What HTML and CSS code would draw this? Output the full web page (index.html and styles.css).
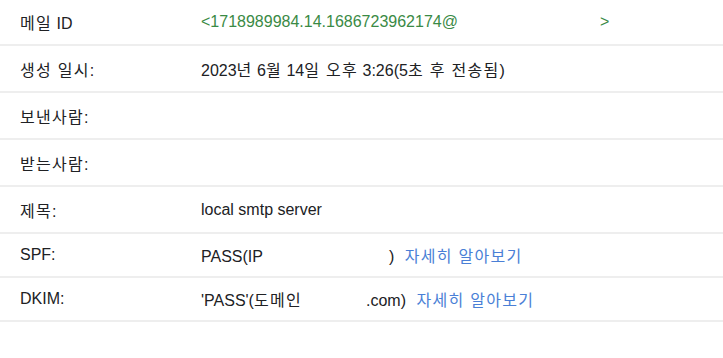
FILE: index.html
```html
<!DOCTYPE html>
<html lang="ko">
<head>
<meta charset="utf-8">
<link rel="stylesheet" href="styles.css">
</head>
<body>
<div class="table">
  <div class="row first">
    <div class="label"><span class="ko">메일</span> ID</div>
    <div class="value green">&lt;1718989984.14.1686723962174@<span class="gap gap-id"></span>&gt;</div>
  </div>
  <div class="row">
    <div class="label"><span class="ko">생성 일시</span>:</div>
    <div class="value">2023<span class="ko">년</span> 6<span class="ko">월</span> 14<span class="ko">일 오후</span> 3:26(5<span class="ko">초 후 전송됨</span>)</div>
  </div>
  <div class="row">
    <div class="label"><span class="ko">보낸사람</span>:</div>
    <div class="value"></div>
  </div>
  <div class="row">
    <div class="label"><span class="ko">받는사람</span>:</div>
    <div class="value"></div>
  </div>
  <div class="row">
    <div class="label"><span class="ko">제목</span>:</div>
    <div class="value">local smtp server</div>
  </div>
  <div class="row short">
    <div class="label">SPF:</div>
    <div class="value">PASS(IP<span class="gap gap-ip"></span>) <a class="link ko">자세히 알아보기</a></div>
  </div>
  <div class="row short">
    <div class="label">DKIM:</div>
    <div class="value">'PASS'(<span class="ko">도메인</span><span class="gap gap-dom"></span>.com) <a class="link ko">자세히 알아보기</a></div>
  </div>
</div>
</body>
</html>
```

FILE: styles.css
```css
html, body {
  margin: 0;
  padding: 0;
  background: #ffffff;
}
body {
  font-family: "Liberation Sans", Arial, "Noto Sans CJK KR", sans-serif;
  font-size: 16px;
  color: #202124;
}
.table {
  display: flex;
  flex-direction: column;
}
.row {
  display: grid;
  grid-template-columns: 201px 1fr;
  align-items: center;
  height: 45px;
  border-bottom: 2px solid #eeeeee;
  box-sizing: content-box;
}
.row.first {
  height: 44px;
}
.row.short {
  height: 42px;
}
.label {
  padding-left: 20px;
}
.value {
  white-space: nowrap;
}
.ko {
  letter-spacing: 1.3px;
}
.green {
  color: #3a8a45;
}
.gap {
  display: inline-block;
}
.gap-id { width: 142px; }
.gap-ip { width: 126px; }
.gap-dom { width: 64px; }
.link {
  color: #4a7fd6;
  margin-left: 6px;
  cursor: pointer;
}
```
